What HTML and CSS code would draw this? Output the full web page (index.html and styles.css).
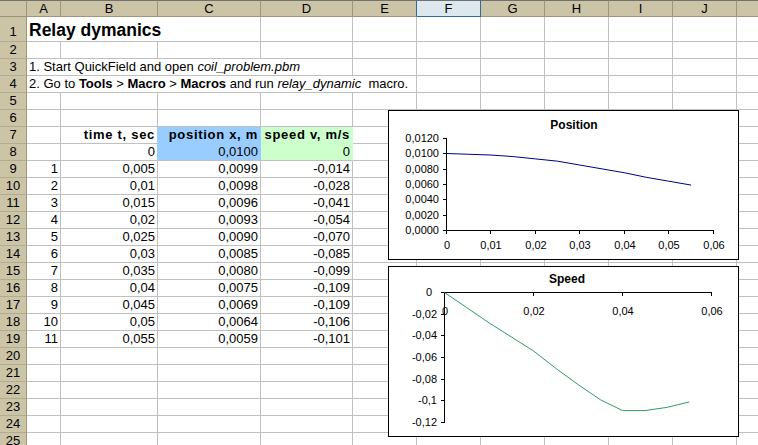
FILE: index.html
```html
<!DOCTYPE html>
<html lang="en">
<head>
<meta charset="utf-8">
<title>Relay dymanics</title>
<link rel="stylesheet" href="styles.css">
</head>
<body>
<div class="window">
  <div class="sheet">
    <div class="hdr corner"></div><div class="hdr">A</div><div class="hdr">B</div><div class="hdr">C</div><div class="hdr">D</div><div class="hdr pre-sel">E</div><div class="hdr sel">F</div><div class="hdr">G</div><div class="hdr">H</div><div class="hdr">I</div><div class="hdr">J</div><div class="hdr"></div>

    <div class="rh tall">1</div><div class="c title span3">Relay dymanics</div><div class="c"></div><div class="c"></div><div class="c"></div><div class="c"></div><div class="c"></div><div class="c"></div><div class="c"></div><div class="c"></div>

    <div class="rh">2</div><div class="c"></div><div class="c"></div><div class="c"></div><div class="c"></div><div class="c"></div><div class="c"></div><div class="c"></div><div class="c"></div><div class="c"></div><div class="c"></div><div class="c"></div>

    <div class="rh">3</div><div class="c span4">1. Start QuickField and open <i>coil_problem.pbm</i></div><div class="c"></div><div class="c"></div><div class="c"></div><div class="c"></div><div class="c"></div><div class="c"></div><div class="c"></div>

    <div class="rh">4</div><div class="c span5">2. Go to <b>Tools</b> &gt; <b>Macro</b> &gt; <b>Macros</b> and run <i>relay_dynamic</i>&nbsp; macro.</div><div class="c"></div><div class="c"></div><div class="c"></div><div class="c"></div><div class="c"></div><div class="c"></div>

    <div class="rh">5</div><div class="c"></div><div class="c"></div><div class="c"></div><div class="c"></div><div class="c"></div><div class="c"></div><div class="c"></div><div class="c"></div><div class="c"></div><div class="c"></div><div class="c"></div>

    <div class="rh">6</div><div class="c"></div><div class="c"></div><div class="c"></div><div class="c"></div><div class="c"></div><div class="c"></div><div class="c"></div><div class="c"></div><div class="c"></div><div class="c"></div><div class="c"></div>

    <div class="rh">7</div><div class="c"></div><div class="c n bold edge-blue">time t, sec</div><div class="c n bold blue top">position x, m</div><div class="c n bold green top">speed v, m/s</div><div class="c"></div><div class="c"></div><div class="c"></div><div class="c"></div><div class="c"></div><div class="c"></div><div class="c"></div>

    <div class="rh">8</div><div class="c"></div><div class="c n edge-blue">0</div><div class="c n blue">0,0100</div><div class="c n green">0</div><div class="c"></div><div class="c"></div><div class="c"></div><div class="c"></div><div class="c"></div><div class="c"></div><div class="c"></div>

    <div class="rh">9</div><div class="c n">1</div><div class="c n">0,005</div><div class="c n">0,0099</div><div class="c n">-0,014</div><div class="c"></div><div class="c"></div><div class="c"></div><div class="c"></div><div class="c"></div><div class="c"></div><div class="c"></div>

    <div class="rh">10</div><div class="c n">2</div><div class="c n">0,01</div><div class="c n">0,0098</div><div class="c n">-0,028</div><div class="c"></div><div class="c"></div><div class="c"></div><div class="c"></div><div class="c"></div><div class="c"></div><div class="c"></div>

    <div class="rh">11</div><div class="c n">3</div><div class="c n">0,015</div><div class="c n">0,0096</div><div class="c n">-0,041</div><div class="c"></div><div class="c"></div><div class="c"></div><div class="c"></div><div class="c"></div><div class="c"></div><div class="c"></div>

    <div class="rh">12</div><div class="c n">4</div><div class="c n">0,02</div><div class="c n">0,0093</div><div class="c n">-0,054</div><div class="c"></div><div class="c"></div><div class="c"></div><div class="c"></div><div class="c"></div><div class="c"></div><div class="c"></div>

    <div class="rh">13</div><div class="c n">5</div><div class="c n">0,025</div><div class="c n">0,0090</div><div class="c n">-0,070</div><div class="c"></div><div class="c"></div><div class="c"></div><div class="c"></div><div class="c"></div><div class="c"></div><div class="c"></div>

    <div class="rh">14</div><div class="c n">6</div><div class="c n">0,03</div><div class="c n">0,0085</div><div class="c n">-0,085</div><div class="c"></div><div class="c"></div><div class="c"></div><div class="c"></div><div class="c"></div><div class="c"></div><div class="c"></div>

    <div class="rh">15</div><div class="c n">7</div><div class="c n">0,035</div><div class="c n">0,0080</div><div class="c n">-0,099</div><div class="c"></div><div class="c"></div><div class="c"></div><div class="c"></div><div class="c"></div><div class="c"></div><div class="c"></div>

    <div class="rh">16</div><div class="c n">8</div><div class="c n">0,04</div><div class="c n">0,0075</div><div class="c n">-0,109</div><div class="c"></div><div class="c"></div><div class="c"></div><div class="c"></div><div class="c"></div><div class="c"></div><div class="c"></div>

    <div class="rh">17</div><div class="c n">9</div><div class="c n">0,045</div><div class="c n">0,0069</div><div class="c n">-0,109</div><div class="c"></div><div class="c"></div><div class="c"></div><div class="c"></div><div class="c"></div><div class="c"></div><div class="c"></div>

    <div class="rh">18</div><div class="c n">10</div><div class="c n">0,05</div><div class="c n">0,0064</div><div class="c n">-0,106</div><div class="c"></div><div class="c"></div><div class="c"></div><div class="c"></div><div class="c"></div><div class="c"></div><div class="c"></div>

    <div class="rh">19</div><div class="c n">11</div><div class="c n">0,055</div><div class="c n">0,0059</div><div class="c n">-0,101</div><div class="c"></div><div class="c"></div><div class="c"></div><div class="c"></div><div class="c"></div><div class="c"></div><div class="c"></div>

    <div class="rh">20</div><div class="c"></div><div class="c"></div><div class="c"></div><div class="c"></div><div class="c"></div><div class="c"></div><div class="c"></div><div class="c"></div><div class="c"></div><div class="c"></div><div class="c"></div>

    <div class="rh">21</div><div class="c"></div><div class="c"></div><div class="c"></div><div class="c"></div><div class="c"></div><div class="c"></div><div class="c"></div><div class="c"></div><div class="c"></div><div class="c"></div><div class="c"></div>

    <div class="rh">22</div><div class="c"></div><div class="c"></div><div class="c"></div><div class="c"></div><div class="c"></div><div class="c"></div><div class="c"></div><div class="c"></div><div class="c"></div><div class="c"></div><div class="c"></div>

    <div class="rh">23</div><div class="c"></div><div class="c"></div><div class="c"></div><div class="c"></div><div class="c"></div><div class="c"></div><div class="c"></div><div class="c"></div><div class="c"></div><div class="c"></div><div class="c"></div>

    <div class="rh">24</div><div class="c"></div><div class="c"></div><div class="c"></div><div class="c"></div><div class="c"></div><div class="c"></div><div class="c"></div><div class="c"></div><div class="c"></div><div class="c"></div><div class="c"></div>

    <div class="rh">25</div><div class="c"></div><div class="c"></div><div class="c"></div><div class="c"></div><div class="c"></div><div class="c"></div><div class="c"></div><div class="c"></div><div class="c"></div><div class="c"></div><div class="c"></div>
  </div>

  <div class="chart chart-position">
    <svg width="349" height="148" viewBox="0 0 349 148">
      <text class="ttl" x="185" y="18" text-anchor="middle">Position</text>
      <path class="axis" d="M57.5 27 V119.5 H324.5"/>
      <path class="axis" d="M54 27.5 H57.5 M54 42.5 H57.5 M54 58.5 H57.5 M54 73.5 H57.5 M54 88.5 H57.5 M54 104.5 H57.5 M54 119.5 H57.5"/>
      <path class="axis" d="M57.5 119.5 V123 M101.5 119.5 V123 M146.5 119.5 V123 M190.5 119.5 V123 M235.5 119.5 V123 M279.5 119.5 V123 M324.5 119.5 V123"/>
      <g class="lbl" text-anchor="end">
        <text x="50" y="31">0,0120</text>
        <text x="50" y="46">0,0100</text>
        <text x="50" y="62">0,0080</text>
        <text x="50" y="77">0,0060</text>
        <text x="50" y="92">0,0040</text>
        <text x="50" y="108">0,0020</text>
        <text x="50" y="123">0,0000</text>
      </g>
      <g class="lbl" text-anchor="middle">
        <text x="58" y="138">0</text>
        <text x="102" y="138">0,01</text>
        <text x="147" y="138">0,02</text>
        <text x="191" y="138">0,03</text>
        <text x="236" y="138">0,04</text>
        <text x="280" y="138">0,05</text>
        <text x="325" y="138">0,06</text>
      </g>
      <polyline class="line-pos" points="57.5,42.5 79.7,43.27 102,44.04 124.2,45.58 146.4,47.89 168.7,50.2 190.9,54.05 213.1,57.9 235.4,61.75 257.6,66.37 279.9,70.22 302.1,74.07"/>
    </svg>
  </div>

  <div class="chart chart-speed">
    <svg width="349" height="169" viewBox="0 0 349 169">
      <text class="ttl" x="178" y="16" text-anchor="middle">Speed</text>
      <path class="axis" d="M55.5 25.5 V155.5 M55.5 25.5 H322.5"/>
      <path class="axis" d="M52 25.5 H55.5 M52 47.5 H55.5 M52 68.5 H55.5 M52 90.5 H55.5 M52 112.5 H55.5 M52 133.5 H55.5 M52 155.5 H55.5"/>
      <path class="axis" d="M55.5 25.5 V29 M144.5 25.5 V29 M233.5 25.5 V29 M322.5 25.5 V29"/>
      <g class="lbl" text-anchor="end">
        <text x="43" y="29">0</text>
        <text x="48" y="51">-0,02</text>
        <text x="48" y="72">-0,04</text>
        <text x="48" y="94">-0,06</text>
        <text x="48" y="116">-0,08</text>
        <text x="48" y="137">-0,1</text>
        <text x="48" y="159">-0,12</text>
      </g>
      <g class="lbl" text-anchor="middle">
        <text x="56" y="48">0</text>
        <text x="145" y="48">0,02</text>
        <text x="234" y="48">0,04</text>
        <text x="323" y="48">0,06</text>
      </g>
      <polyline class="line-speed" points="55.5,25.5 77.8,40.67 100,55.83 122.3,69.92 144.6,84 166.8,101.33 189.1,117.58 211.4,132.75 233.6,143.58 255.9,143.58 278.2,140.33 300.4,134.9"/>
    </svg>
  </div>
</div>
</body>
</html>
```

FILE: styles.css
```css
html, body {
  margin: 0;
  padding: 0;
  background: #ffffff;
  overflow: hidden;
}

body {
  width: 758px;
  height: 445px;
  font-family: "Liberation Sans", Arial, sans-serif;
  font-size: 13px;
  color: #000000;
}

.window {
  position: relative;
  width: 758px;
  height: 445px;
  overflow: hidden;
}

.sheet {
  display: grid;
  grid-template-columns: 27px 34px 97px 103px 92px 64px 64px 64px 64px 64px 64px 64px;
  grid-template-rows: 17px 25px repeat(24, 17px);
  width: 801px;
}

.sheet > div {
  box-sizing: border-box;
  border-right: 1px solid #c0c0c0;
  border-bottom: 1px solid #c0c0c0;
  line-height: 16px;
  white-space: nowrap;
  overflow: hidden;
  padding: 0 2px;
}

.sheet > .hdr {
  background: #cbc4a7;
  border-top: 1px solid #707070;
  border-right-color: #9f9679;
  border-bottom-color: #9f9679;
  text-align: center;
  line-height: 15px;
  padding: 0;
}

.sheet > .hdr.pre-sel {
  border-right-color: #2f6c9c;
}

.sheet > .hdr.sel {
  background: #dde7ee;
  border-right-color: #2f6c9c;
  border-bottom-color: #2f6c9c;
}

.sheet > .rh {
  background: #cbc4a7;
  border-right-color: #9f9679;
  border-bottom-color: #b3ab8f;
  text-align: center;
  padding: 0;
}

.sheet > .rh.tall {
  padding-top: 7px;
}

.sheet > .title {
  font-size: 17.5px;
  font-weight: bold;
  line-height: 22px;
  padding-top: 2px;
}

.span3 { grid-column: span 3; }
.span4 { grid-column: span 4; }
.span5 { grid-column: span 5; }

.sheet > .n {
  text-align: right;
}

.bold {
  font-weight: bold;
  letter-spacing: 0.7px;
}

.sheet > .blue {
  background: #99ccff;
  border-right-color: #99ccff;
}

.sheet > .blue.top {
  border-bottom-color: #99ccff;
}

.sheet > .green {
  background: #ccffcc;
  border-right-color: #ccffcc;
}

.sheet > .green.top {
  border-bottom-color: #ccffcc;
}

.sheet > .edge-blue {
  border-right-color: #99ccff;
}

.chart {
  position: absolute;
  left: 388px;
  box-sizing: border-box;
  width: 351px;
  border: 1px solid #000000;
  background: #ffffff;
}

.chart svg {
  display: block;
}

.chart-position {
  top: 110px;
  height: 150px;
}

.chart-speed {
  top: 266px;
  height: 171px;
}

.ttl {
  font-family: "Liberation Sans", Arial, sans-serif;
  font-size: 12px;
  font-weight: bold;
  fill: #000000;
}

.lbl {
  font-family: "Liberation Sans", Arial, sans-serif;
  font-size: 11px;
  fill: #000000;
}

.axis {
  fill: none;
  stroke: #000000;
  stroke-width: 1;
  shape-rendering: crispEdges;
}

.line-pos {
  fill: none;
  stroke: #000080;
  stroke-width: 1;
}

.line-speed {
  fill: none;
  stroke: #339966;
  stroke-width: 1;
}
```
